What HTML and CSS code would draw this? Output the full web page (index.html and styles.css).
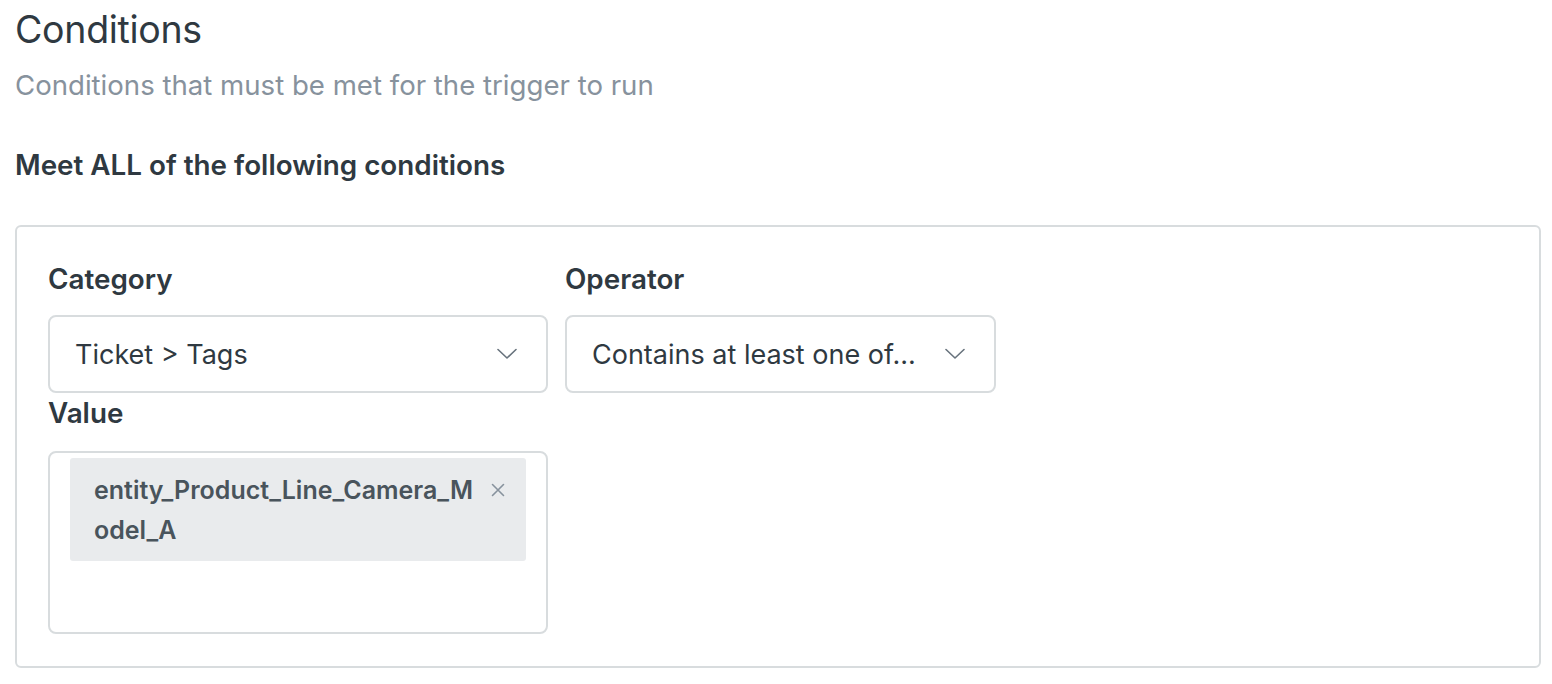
FILE: index.html
```html
<!DOCTYPE html>
<html lang="en">
<head>
<meta charset="utf-8">
<title>Conditions</title>
<link rel="stylesheet" href="styles.css">
</head>
<body>
<section class="page">
  <h1 class="title">Conditions</h1>
  <p class="subtitle">Conditions that must be met for the trigger to run</p>
  <h2 class="group-title">Meet ALL of the following conditions</h2>
  <div class="card">
    <div class="row">
      <div class="field field-category">
        <label class="label">Category</label>
        <div class="select">
          <span class="select-text">Ticket &gt; Tags</span>
          <svg class="chevron" viewBox="0 0 20 12" width="20" height="12"><path d="M1 1.5 L10 10 L19 1.5" fill="none" stroke="#68737d" stroke-width="1.6" stroke-linecap="round" stroke-linejoin="round"/></svg>
        </div>
      </div>
      <div class="field field-operator">
        <label class="label">Operator</label>
        <div class="select">
          <span class="select-text">Contains at least one of...</span>
          <svg class="chevron" viewBox="0 0 20 12" width="20" height="12"><path d="M1 1.5 L10 10 L19 1.5" fill="none" stroke="#68737d" stroke-width="1.6" stroke-linecap="round" stroke-linejoin="round"/></svg>
        </div>
      </div>
    </div>
    <div class="field field-value">
      <label class="label">Value</label>
      <div class="tag-input">
        <div class="tag">
          <span class="tag-text">entity_Product_Line_Camera_Model_A</span>
          <svg class="tag-close" viewBox="0 0 14 14" width="14" height="14"><path d="M1.5 1.5 L12.5 12.5 M12.5 1.5 L1.5 12.5" fill="none" stroke="#87929d" stroke-width="1.6" stroke-linecap="round"/></svg>
        </div>
      </div>
    </div>
  </div>
</section>
</body>
</html>
```

FILE: styles.css
```css
* { box-sizing: border-box; }
html, body { margin: 0; padding: 0; background: #ffffff; }
body {
  font-family: Inter, "Noto Sans", "Liberation Sans", sans-serif;
  color: #2f3941;
}
.page {
  padding: 8px 11px 0 15px;
}
.title {
  margin: 0;
  font-size: 37.5px;
  font-weight: 400;
  line-height: 44px;
  letter-spacing: -0.3px;
}
.subtitle {
  margin: 13px 0 0 0;
  font-size: 27.6px;
  line-height: 40px;
  color: #87929d;
}
.group-title {
  margin: 40px 0 0 0;
  font-size: 27.8px;
  font-weight: 600;
  line-height: 40px;
}
.card {
  margin-top: 40px;
  border: 2px solid #d8dcde;
  border-radius: 6px;
  background: #ffffff;
  padding: 32px 31px 32px 31px;
  height: 443px;
}
.row {
  display: flex;
  gap: 17px;
}
.field { display: flex; flex-direction: column; }
.field-category { width: 500px; }
.field-operator { width: 431px; }
.field-value { width: 500px; }
.label {
  font-size: 27.8px;
  font-weight: 600;
  line-height: 40px;
  margin-bottom: 16px;
}
.field-value .label { margin-bottom: 18px; }
.select {
  height: 78px;
  border: 2px solid #d8dcde;
  border-radius: 8px;
  background: #fff;
  display: flex;
  align-items: center;
  justify-content: space-between;
  padding: 0 29px 0 25px;
}
.select-text {
  font-size: 27px;
  color: #2f3941;
}
.chevron { flex: none; }
.tag-input {
  height: 183px;
  border: 2px solid #d8dcde;
  border-radius: 8px;
  background: #fff;
  padding: 5px 20px;
}
.tag {
  background: #e9ebed;
  border-radius: 3px;
  display: flex;
  align-items: flex-start;
  padding: 12px 21px 11px 24px;
  gap: 12px;
}
.tag-text {
  flex: 1;
  font-size: 25px;
  font-weight: 600;
  line-height: 40px;
  color: #49545c;
  word-break: break-all;
}
.tag-close { flex: none; margin-top: 13px; }
```
